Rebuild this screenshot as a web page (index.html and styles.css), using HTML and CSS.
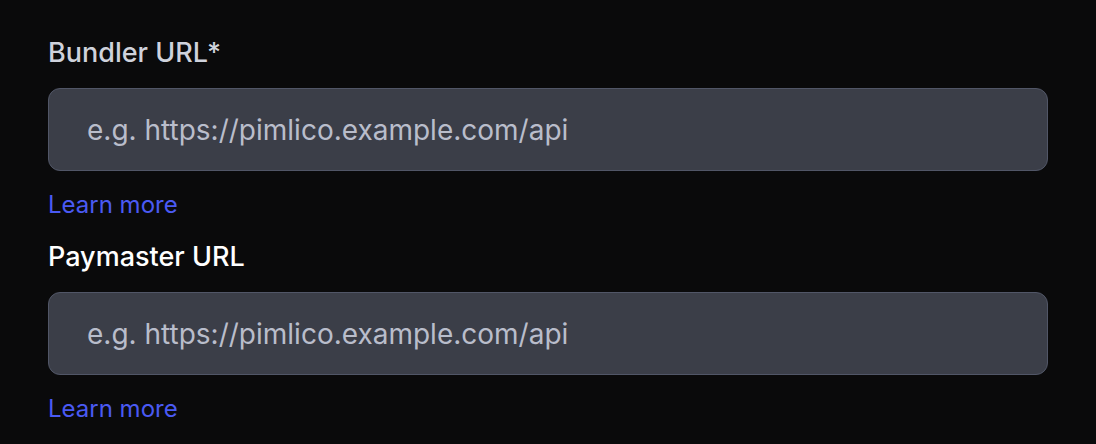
FILE: index.html
```html
<!DOCTYPE html>
<html lang="en">
<head>
<meta charset="utf-8">
<title>Bundler settings</title>
<link rel="stylesheet" href="styles.css">
</head>
<body>
<div class="form">
  <div class="field">
    <label class="label label-muted" for="bundler">Bundler URL*</label>
    <input class="input" id="bundler" type="text" placeholder="e.g. https://pimlico.example.com/api">
    <a class="link" href="#">Learn more</a>
  </div>
  <div class="field">
    <label class="label" for="paymaster">Paymaster URL</label>
    <input class="input" id="paymaster" type="text" placeholder="e.g. https://pimlico.example.com/api">
    <a class="link" href="#">Learn more</a>
  </div>
</div>
</body>
</html>
```

FILE: styles.css
```css
html, body {
  margin: 0;
  padding: 0;
  background: #0a0a0b;
}
body {
  font-family: "Inter", "Lato", sans-serif;
  width: 1096px;
  height: 444px;
  overflow: hidden;
}
.form {
  display: flex;
  flex-direction: column;
  gap: 19px;
  padding: 36px 48px 0 48px;
  width: 1000px;
}
.field {
  display: flex;
  flex-direction: column;
}
.label {
  font-size: 27px;
  line-height: 34px;
  font-weight: 500;
  color: #ffffff;
  margin-bottom: 18px;
}
.label-muted {
  color: #cfd2dc;
}
.input {
  box-sizing: border-box;
  width: 1000px;
  height: 83px;
  margin: 0;
  padding: 0 38px;
  background: #3b3e48;
  border: 1.5px solid #515667;
  border-radius: 12px;
  font-family: inherit;
  font-size: 28px;
  color: #ffffff;
  outline: none;
}
.input::placeholder {
  color: #b9bdcb;
  opacity: 1;
}
.link {
  margin-top: 18px;
  font-size: 24px;
  line-height: 32px;
  color: #4a5af3;
  text-decoration: none;
  align-self: flex-start;
}
```
